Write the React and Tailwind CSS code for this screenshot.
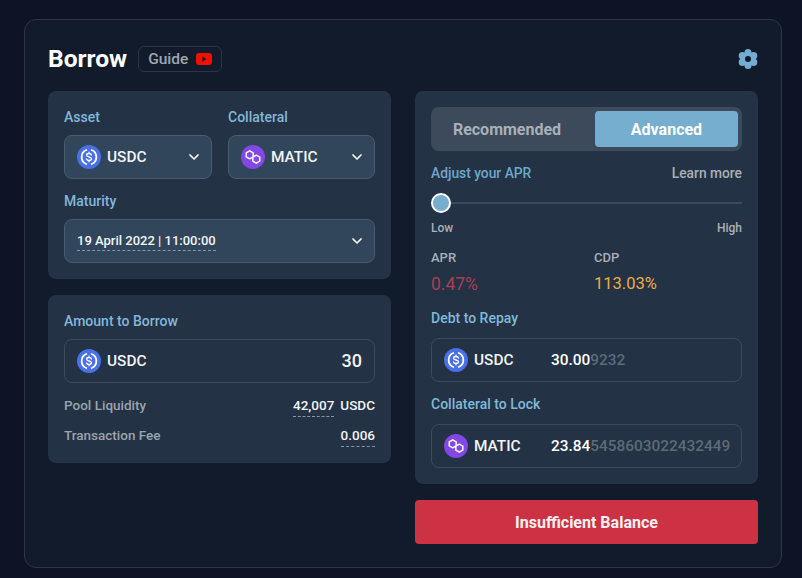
import React from "react";
import { ChevronDown } from "lucide-react";

const UsdcIcon = () => (
	<svg width="24" height="24" viewBox="0 0 24 24" className="shrink-0">
		<circle cx="12" cy="12" r="12" fill="#4a70e8" />
		<path d="M9.3 5a7.6 7.6 0 0 0 0 14M14.7 5a7.6 7.6 0 0 1 0 14" fill="none" stroke="#fff" strokeWidth="1.8" strokeLinecap="round" />
		<path d="M14.5 10c-.3-.9-1.2-1.5-2.5-1.5-1.4 0-2.4.7-2.4 1.7 0 2.4 4.9 1.2 4.9 3.6 0 1-1.1 1.7-2.5 1.7-1.3 0-2.2-.6-2.5-1.5M12 7.2v1.3M12 15.5v1.3" fill="none" stroke="#fff" strokeWidth="1.3" strokeLinecap="round" />
	</svg>
);

const MaticIcon = () => (
	<svg width="24" height="24" viewBox="0 0 24 24" className="shrink-0">
		<circle cx="12" cy="12" r="12" fill="#8247e5" />
		<path d="M8.7 5.8l3.46 2v4l-3.46 2-3.46-2v-4zM15.3 10.2l3.46 2v4l-3.46 2-3.46-2v-4z" fill="none" stroke="#fff" strokeWidth="1.5" strokeLinejoin="round" />
	</svg>
);

const GearIcon = () => (
	<svg width="20" height="20" viewBox="0 0 20 20">
		<g fill="#74add0">
			<circle cx="10" cy="3.5" r="3.5" />
			<circle cx="10" cy="16.5" r="3.5" />
			<circle cx="4.4" cy="6.75" r="3.7" />
			<circle cx="15.6" cy="6.75" r="3.7" />
			<circle cx="4.4" cy="13.25" r="3.7" />
			<circle cx="15.6" cy="13.25" r="3.7" />
			<circle cx="10" cy="10" r="6" />
		</g>
		<circle cx="10" cy="10" r="3" fill="#121b2b" />
	</svg>
);

const Label = ({ children, className = "mb-2" }) => (
	<div className={`text-sm leading-5 font-medium text-[#82b8d8] ${className}`}>{children}</div>
);

const Select = ({ children }) => (
	<div className="h-11 flex items-center justify-between pl-3 pr-[9px] rounded-lg border border-[#4a5b6b] bg-[#31465a]">
		{children}
		<ChevronDown size={16} strokeWidth={2.6} className="text-white shrink-0" />
	</div>
);

const Token = ({ icon, name }) => (
	<div className="flex items-center gap-[6px] text-[15.4px] font-medium text-[#f1f4f7]">
		{icon}
		<span className="pt-[2px]">{name}</span>
	</div>
);

const Field = ({ icon, name, strong, faint }) => (
	<div className="h-11 flex items-center pl-3 rounded-lg border border-[#3d4c5c]">
		<div className="w-[107px] shrink-0">
			<Token icon={icon} name={name} />
		</div>
		<div className="pt-[2px] text-[15.4px] font-medium text-white">
			{strong}
			<span className="text-[#5d6a78]">{faint}</span>
		</div>
	</div>
);

const App = () => {
	return (
		<div className="w-[802px] h-[578px] overflow-hidden bg-[#0e1426] pt-[19px] pl-6 font-['Roboto',sans-serif]">
			<div className="w-[758px] h-[549px] rounded-xl border border-[#2c3646] bg-[#121b2b] pt-[26px] px-[23px]">
				<div className="h-[26px] flex items-center justify-between mb-[19px]">
					<div className="flex items-center gap-[11px]">
						<h1 className="text-[24.6px] font-bold text-white leading-none">Borrow</h1>
						<div className="h-[26px] flex items-center gap-2 px-[9px] rounded-md border border-[#2b3544] text-[15.5px] font-medium text-[#a0a6ae]">
							<span className="pt-[2px]">Guide</span>
							<svg width="16" height="12" viewBox="0 0 16 12">
								<rect width="16" height="12" rx="3" fill="#f00f00" />
								<path d="M6.4 3.6v4.8L10.5 6z" fill="#20141c" />
							</svg>
						</div>
					</div>
					<GearIcon />
				</div>

				<div className="flex gap-6 items-start">
					<div className="w-[343px] flex flex-col gap-4">
						<div className="rounded-lg bg-[#233244] p-4">
							<div className="grid grid-cols-[148px_147px] gap-4 mb-3">
								<div>
									<Label>Asset</Label>
									<Select>
										<Token icon={<UsdcIcon />} name="USDC" />
									</Select>
								</div>
								<div>
									<Label>Collateral</Label>
									<Select>
										<Token icon={<MaticIcon />} name="MATIC" />
									</Select>
								</div>
							</div>
							<Label>Maturity</Label>
							<Select>
								<span className="text-[13px] font-medium text-[#f1f4f7] border-b border-dashed border-[#8a96a3] leading-[18px]">
									19 April 2022 | 11:00:00
								</span>
							</Select>
						</div>

						<div className="rounded-lg bg-[#233244] px-4 pt-4 pb-[18px]">
							<Label>Amount to Borrow</Label>
							<div className="h-11 flex items-center justify-between pl-3 pr-3 rounded-lg border border-[#3d4c5c]">
								<Token icon={<UsdcIcon />} name="USDC" />
								<span className="text-lg font-medium text-[#f1f4f7]">30</span>
							</div>
							<div className="mt-3 h-5 flex items-center justify-between text-[13.5px] font-medium">
								<span className="text-[#9ba4ae]">Pool Liquidity</span>
								<span className="text-[#f1f4f7]">
									<span className="border-b border-dashed border-[#8a96a3] pb-[3px] mr-[6px]">42,007</span>
									USDC
								</span>
							</div>
							<div className="mt-[10px] h-5 flex items-center justify-between text-[13.5px] font-medium">
								<span className="text-[#9ba4ae]">Transaction Fee</span>
								<span className="text-[#f1f4f7]">
									<span className="border-b border-dashed border-[#8a96a3] pb-[3px]">0.006</span>
								</span>
							</div>
						</div>
					</div>

					<div className="w-[343px] flex flex-col gap-4">
						<div className="rounded-lg bg-[#233244] p-4">
							<div className="h-11 flex items-center rounded-lg bg-[#3d4a5b] p-1 text-base font-bold">
								<div className="flex-1 pr-4 pt-[2px] text-center text-[#a9b0b8]">Recommended</div>
								<div className="w-[143px] h-9 pt-[2px] flex items-center justify-center rounded bg-[#76aecf] text-white">Advanced</div>
							</div>
							<div className="mt-3 h-5 flex items-center justify-between text-[13.8px] font-medium">
								<span className="text-[#6ea8ca]">Adjust your APR</span>
								<span className="text-[#a9b0b8]">Learn more</span>
							</div>
							<div className="relative mt-[10px] h-5 flex items-center">
								<div className="w-full h-[2px] bg-[#3d4a5b]" />
								<div className="absolute left-0 top-0 w-5 h-5 rounded-full border-2 border-white bg-[#76aecf]" />
							</div>
							<div className="mt-[7px] h-4 flex items-center justify-between text-xs font-medium text-[#a9b0b8]">
								<span>Low</span>
								<span>High</span>
							</div>
							<div className="mt-[12px] grid grid-cols-[163px_1fr] text-[13px] font-medium text-[#a9b0b8]">
								<div>
									<div className="leading-5">APR</div>
									<div className="mt-[6px] text-[17.5px] leading-5 font-normal text-[#a83f54]">0.47%</div>
								</div>
								<div>
									<div className="leading-5">CDP</div>
									<div className="mt-[6px] text-[16.5px] leading-5 font-normal text-[#e9ae46]">113.03%</div>
								</div>
							</div>
							<div className="mt-[14px]">
								<Label className="mb-[10px]">Debt to Repay</Label>
								<Field icon={<UsdcIcon />} name="USDC" strong="30.00" faint="9232" />
							</div>
							<div className="mt-3">
								<Label className="mb-[10px]">Collateral to Lock</Label>
								<Field icon={<MaticIcon />} name="MATIC" strong="23.84" faint="5458603022432449" />
							</div>
						</div>
						<button className="h-11 pt-[2px] rounded bg-[#cc3244] text-base font-bold text-[#f8f0f1]">Insufficient Balance</button>
					</div>
				</div>
			</div>
		</div>
	);
};

export default App;
